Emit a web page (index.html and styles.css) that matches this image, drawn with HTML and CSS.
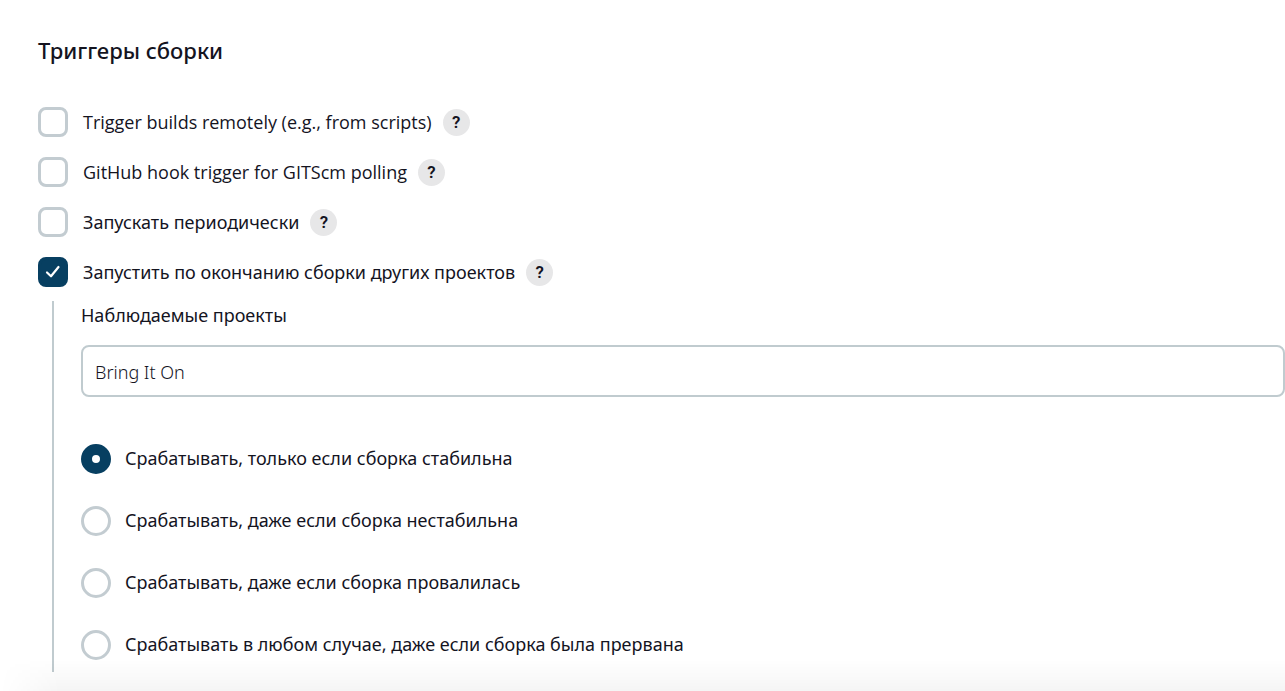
FILE: index.html
```html
<!DOCTYPE html>
<html lang="ru">
<head>
<meta charset="utf-8">
<meta name="viewport" content="width=device-width, initial-scale=1">
<title>Триггеры сборки</title>
<link rel="stylesheet" href="styles.css">
</head>
<body>
<main class="page">
  <form class="section">
    <h2 class="section-title">Триггеры сборки</h2>
    <div class="options">
      <div class="option">
        <input class="check" type="checkbox" id="remote">
        <label class="latin" lang="en" for="remote">Trigger builds remotely (e.g., from scripts)</label>
        <button class="help" type="button">?</button>
      </div>
      <div class="option">
        <input class="check" type="checkbox" id="github">
        <label class="latin" lang="en" for="github">GitHub hook trigger for GITScm polling</label>
        <button class="help" type="button">?</button>
      </div>
      <div class="option">
        <input class="check" type="checkbox" id="periodic">
        <label for="periodic">Запускать периодически</label>
        <button class="help" type="button">?</button>
      </div>
      <div class="option">
        <span class="check-wrap">
          <input class="check" type="checkbox" id="upstream" checked>
          <svg class="tick" viewBox="0 0 30 30" aria-hidden="true"><path d="M9 15.500l4 3.800L20.500 10"/></svg>
        </span>
        <label for="upstream">Запустить по окончанию сборки других проектов</label>
        <button class="help" type="button">?</button>
      </div>
    </div>
    <div class="nested">
      <label class="field-label" for="projects">Наблюдаемые проекты</label>
      <input class="field" type="text" id="projects" value="Bring It On">
      <div class="radios">
        <div class="choice">
          <input class="radio" type="radio" name="threshold" id="stable" checked>
          <label for="stable">Срабатывать, только если сборка стабильна</label>
        </div>
        <div class="choice">
          <input class="radio" type="radio" name="threshold" id="unstable">
          <label for="unstable">Срабатывать, даже если сборка нестабильна</label>
        </div>
        <div class="choice">
          <input class="radio" type="radio" name="threshold" id="failed">
          <label for="failed">Срабатывать, даже если сборка провалилась</label>
        </div>
        <div class="choice">
          <input class="radio" type="radio" name="threshold" id="always">
          <label for="always">Срабатывать в любом случае, даже если сборка была прервана</label>
        </div>
      </div>
    </div>
  </form>
  <div class="bottom-shade"></div>
</main>
</body>
</html>
```
FILE: styles.css
```css
* { box-sizing: border-box; }

body {
  margin: 0;
  background: #fff;
  color: #14141f;
  font: 400 18px/26px "Noto Sans", "Open Sans", sans-serif;
}

.latin { font-family: "Open Sans", "Noto Sans", sans-serif; }

.page {
  position: relative;
  min-height: 100vh;
  overflow: hidden;
}

.section { padding: 33px 0 19px 38px; }

.section-title {
  margin: 0 0 40px;
  font-size: 22px;
  line-height: 34px;
  font-weight: 500;
}

.options {
  display: grid;
  gap: 20px;
}

.option {
  display: flex;
  align-items: center;
  height: 30px;
}

.option label { margin: 0 11px 0 15px; }

.check,
.radio {
  appearance: none;
  display: block;
  flex: none;
  width: 30px;
  height: 30px;
  margin: 0;
  border: 3px solid #c3ccd1;
  background: #fff;
}

.check { border-radius: 8px; }
.radio { border-radius: 50%; }

.check:checked {
  border-color: #073f61;
  background: #073f61;
}

.radio:checked { border: 11px solid #073f61; }

.check-wrap { position: relative; }

.tick {
  position: absolute;
  inset: 0;
  fill: none;
  stroke: #fff;
  stroke-width: 2.2;
  stroke-linecap: round;
  stroke-linejoin: round;
  pointer-events: none;
}

.help {
  width: 27px;
  height: 27px;
  padding: 0;
  border: 0;
  border-radius: 50%;
  background: #e7e7e8;
  color: #14141f;
  font: 600 17px/27px Roboto, sans-serif;
  text-align: center;
}

.nested {
  margin: 14px 0 0 14px;
  padding: 1px 0 12px 27px;
  border-left: 2px solid #c0cbcf;
}

.field-label {
  display: block;
  margin-bottom: 17px;
}

.field {
  display: block;
  width: 100%;
  height: 52px;
  padding: 2px 12px 0;
  border: 2px solid #c0cbcf;
  border-radius: 8px;
  background: #fff;
  color: #14141f;
  font: 300 18px/26px "Noto Sans", "Open Sans", sans-serif;
}

.radios {
  display: grid;
  gap: 32px;
  margin-top: 47px;
}

.choice {
  display: flex;
  align-items: center;
  gap: 14px;
  height: 30px;
}

.choice label { padding-bottom: 2px; }

.bottom-shade {
  position: absolute;
  right: 0;
  bottom: 0;
  left: 0;
  height: 32px;
  background: linear-gradient(to bottom, rgba(0, 0, 0, 0), rgba(0, 0, 0, 0.04));
  mask-image: linear-gradient(to right, transparent, #000 60px);
  pointer-events: none;
}
```
